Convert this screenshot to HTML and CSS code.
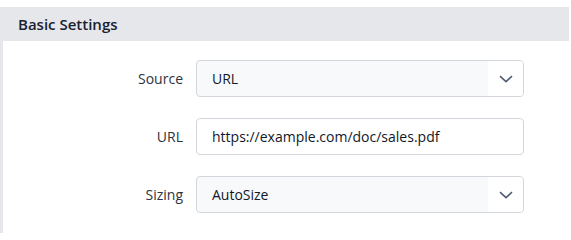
FILE: index.html
```html
<!DOCTYPE html>
<html>
<head>
<meta charset="utf-8">
<link rel="stylesheet" href="styles.css">
</head>
<body>
<div class="panel">
  <div class="panel-header">Basic Settings</div>
  <div class="panel-body">
    <div class="row">
      <label class="label">Source</label>
      <div class="select">
        <span class="value">URL</span>
        <span class="arrow"><svg width="14" height="8" viewBox="0 0 14 8"><path d="M1 1.2 L7 6.6 L13 1.2" fill="none" stroke="#4f5d73" stroke-width="1.6"/></svg></span>
      </div>
    </div>
    <div class="row">
      <label class="label">URL</label>
      <div class="input"><span class="value">https://example.com/doc/sales.pdf</span></div>
    </div>
    <div class="row">
      <label class="label">Sizing</label>
      <div class="select">
        <span class="value">AutoSize</span>
        <span class="arrow"><svg width="14" height="8" viewBox="0 0 14 8"><path d="M1 1.2 L7 6.6 L13 1.2" fill="none" stroke="#4f5d73" stroke-width="1.6"/></svg></span>
      </div>
    </div>
  </div>
</div>
</body>
</html>
```
FILE: styles.css
```css
html, body {
  margin: 0;
  padding: 0;
  background: #ffffff;
}
body {
  font-family: "Open Sans", "Noto Sans", sans-serif;
  font-size: 14px;
  color: #1f2937;
}
.panel {
  padding-top: 7px;
  width: 569px;
}
.panel-header {
  height: 34px;
  background: #e5e7eb;
  display: flex;
  align-items: center;
  padding-left: 18px;
  font-weight: 600;
  font-size: 15px;
  color: #1a2130;
}
.panel-body {
  border-left: 3px solid #e5e7eb;
  padding-top: 19px;
  padding-bottom: 20px;
  display: flex;
  flex-direction: column;
  gap: 21px;
}
.row {
  display: grid;
  grid-template-columns: 180px 328px;
  column-gap: 13px;
  align-items: center;
}
.label {
  text-align: right;
  color: #2d3440;
}
.select, .input {
  box-sizing: border-box;
  height: 37px;
  border: 1px solid #d3d6dc;
  border-radius: 4px;
  display: flex;
  align-items: center;
  color: #111827;
  overflow: hidden;
}
.select {
  background: #f8f9fb;
}
.input {
  background: #ffffff;
}
.value {
  flex: 1;
  padding-left: 15px;
  white-space: nowrap;
}
.arrow {
  width: 35px;
  align-self: stretch;
  background: #ffffff;
  display: flex;
  align-items: center;
  justify-content: center;
}
.arrow svg {
  display: block;
}
```
